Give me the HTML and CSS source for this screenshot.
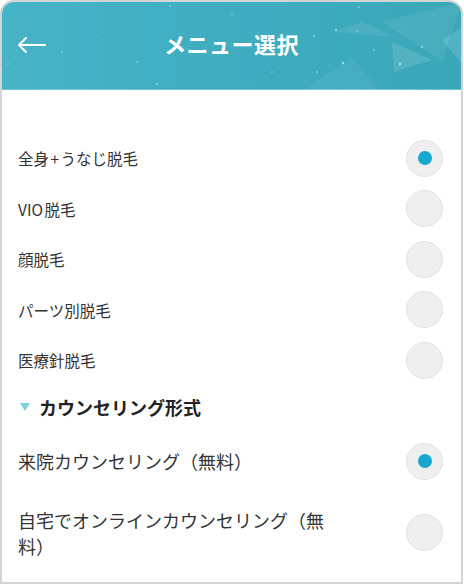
FILE: index.html
```html
<!DOCTYPE html>
<html lang="ja">
<head>
<meta charset="utf-8">
<title>メニュー選択</title>
<link rel="stylesheet" href="styles.css">
</head>
<body>
<div class="card">
  <header class="header">
    <svg class="header-deco" viewBox="0 0 460 90" width="460" height="90" aria-hidden="true">
      <polygon points="330,30 360,20 395,35" fill="#ffffff" opacity="0.08"/>
      <polygon points="380,20 460,0 440,60" fill="#ffffff" opacity="0.07"/>
      <polygon points="390,40 430,58 392,70" fill="#ffffff" opacity="0.12"/>
      <polygon points="440,38 460,25 460,62" fill="#ffffff" opacity="0.12"/>
      <polygon points="300,90 350,55 380,90" fill="#ffffff" opacity="0.05"/>
      <g fill="#ffffff" opacity="0.55">
        <circle cx="168" cy="4" r="0.8"/><circle cx="60" cy="50" r="0.8"/>
        <circle cx="135" cy="60" r="0.8"/><circle cx="155" cy="82" r="0.9"/>
        <circle cx="6" cy="62" r="0.8"/><circle cx="230" cy="12" r="0.7"/>
        <circle cx="284" cy="36" r="0.8"/><circle cx="312" cy="34" r="0.9"/>
        <circle cx="341" cy="61" r="1.2"/><circle cx="315" cy="70" r="0.8"/>
        <circle cx="398" cy="62" r="1.4"/><circle cx="372" cy="48" r="0.8"/>
        <circle cx="357" cy="5" r="0.8"/><circle cx="334" cy="28" r="1"/>
        <circle cx="355" cy="29" r="0.8"/><circle cx="246" cy="42" r="0.7"/>
        <circle cx="270" cy="70" r="0.7"/><circle cx="420" cy="45" r="0.9"/>
        <circle cx="180" cy="45" r="0.7"/><circle cx="100" cy="30" r="0.6"/>
      </g>
    </svg>
    <button class="back" aria-label="戻る">
      <svg viewBox="0 0 28 16" width="28" height="16">
        <path d="M1 8 H27 M8 1 L1 8 L8 15" fill="none" stroke="#ffffff" stroke-width="2" stroke-linecap="round" stroke-linejoin="round"/>
      </svg>
    </button>
    <h1 class="title">メニュー選択</h1>
  </header>

  <div class="body">
    <ul class="options">
      <li class="opt"><span class="opt-label">全身 + うなじ脱毛</span><span class="radio is-on"></span></li>
      <li class="opt"><span class="opt-label">VIO 脱毛</span><span class="radio"></span></li>
      <li class="opt"><span class="opt-label">顔脱毛</span><span class="radio"></span></li>
      <li class="opt"><span class="opt-label">パーツ別脱毛</span><span class="radio"></span></li>
      <li class="opt"><span class="opt-label">医療針脱毛</span><span class="radio"></span></li>
    </ul>

    <h2 class="section"><span class="tri"></span>カウンセリング形式</h2>

    <ul class="options options-lg">
      <li class="opt opt-lg"><span class="opt-label">来院カウンセリング（無料）</span><span class="radio is-on"></span></li>
      <li class="opt opt-lg opt-wrap"><span class="opt-label">自宅でオンラインカウンセリング（無料）</span><span class="radio"></span></li>
    </ul>
  </div>
</div>
</body>
</html>
```

FILE: styles.css
```css
* { box-sizing: border-box; }

html, body {
  margin: 0;
  padding: 0;
  background: #ffffff;
}

body {
  font-family: "Noto Sans CJK JP", "Noto Sans", sans-serif;
  color: #333333;
}

.card {
  width: 463px;
  height: 584px;
  border: 2px solid #d4d4d4;
  border-radius: 14px 14px 0 0;
  overflow: hidden;
  background: #ffffff;
}

.header {
  position: relative;
  height: 88px;
  display: flex;
  align-items: center;
  justify-content: center;
  background: linear-gradient(90deg, #47b3c7 0%, #40adc1 50%, #3aa7b9 100%);
  border-bottom: 1px solid #6cc3d2;
}

.header-deco {
  position: absolute;
  left: 0;
  top: 0;
}

.back {
  position: absolute;
  left: 16px;
  top: 35px;
  padding: 0;
  margin: 0;
  border: 0;
  background: none;
  display: flex;
}

.title {
  position: relative;
  margin: -5px 0 0;
  font-size: 22px;
  font-weight: 700;
  color: #ffffff;
  letter-spacing: 0.5px;
}

.body {
  padding: 43px 18px 0 16px;
}

.options {
  list-style: none;
  margin: 0;
  padding: 0;
}

.opt {
  display: flex;
  align-items: center;
  justify-content: space-between;
  height: 50.5px;
  font-size: 15.5px;
}

.opt-label {
  max-width: 316px;
  line-height: 26px;
  word-spacing: -2px;
}

.opt-lg {
  height: auto;
  padding: 15px 0;
  font-size: 18px;
}

.opt-wrap {
  padding: 12px 0;
}

.radio {
  flex: none;
  width: 37px;
  height: 37px;
  border-radius: 50%;
  background: #efefef;
  border: 1px solid #e3e3e3;
  display: flex;
  align-items: center;
  justify-content: center;
}

.radio.is-on::after {
  content: "";
  width: 14px;
  height: 14px;
  border-radius: 50%;
  background: #16a8cf;
}

.section {
  display: flex;
  align-items: center;
  height: 42px;
  margin: 0;
  font-size: 18px;
  font-weight: 700;
  color: #222222;
}

.tri {
  width: 0;
  height: 0;
  margin: 0 9px 0 2px;
  border-left: 5px solid transparent;
  border-right: 5px solid transparent;
  border-top: 8px solid #7fd0dd;
}
```
